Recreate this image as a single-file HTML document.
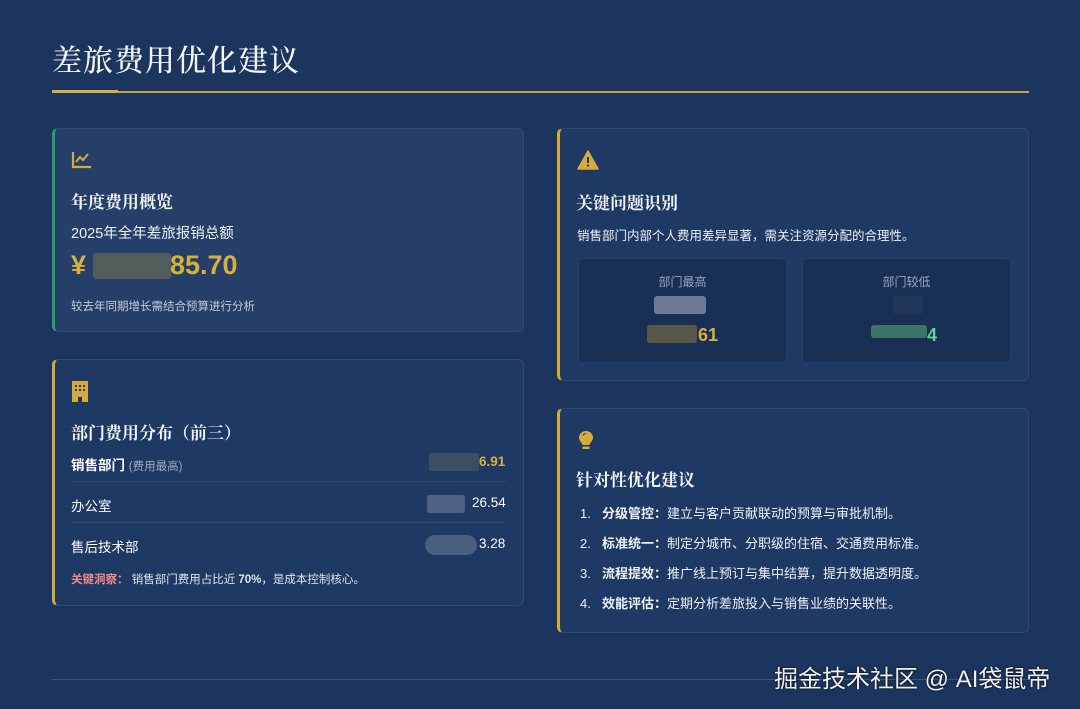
<!DOCTYPE html>
<html><head><meta charset="utf-8"><style>
*{margin:0;padding:0;box-sizing:border-box}
body{width:1080px;height:709px;background:#1b355e;font-family:"Liberation Sans","Noto Sans CJK SC",sans-serif;color:#fff;position:relative;overflow:hidden}
.abs{position:absolute}
h1{position:absolute;left:52px;top:36px;font-family:"Liberation Serif","Noto Serif CJK SC",serif;font-weight:500;font-size:30px;letter-spacing:1px;color:#f4f6fa}
.card{position:absolute;border:1px solid #2d4a75;border-radius:6px;background:#1e3963}
.h{font-family:"Liberation Serif","Noto Serif CJK SC",serif;font-weight:700;font-size:17px;color:#f1f3f7;position:absolute;left:16px}
.blk{position:absolute;border-radius:3px}
</style></head><body>
<h1>差旅费用优化建议</h1>
<div class="abs" style="left:52px;top:91px;width:977px;height:2px;background:#c9a63a"></div>
<div class="abs" style="left:52px;top:90px;width:66px;height:3px;background:#d8b040"></div>

<!-- card1 -->
<div class="card" style="left:52px;top:128px;width:472px;height:204px;background:#253f68;border-left:3px solid #2e9a6a">
<svg class="abs" style="left:16px;top:21px" width="22" height="20" viewBox="0 0 22 20"><path d="M2 2V17H20" stroke="#d6ab3a" stroke-width="2.2" fill="none"/><path d="M5 12L9 7L12 10L17 4" stroke="#d6ab3a" stroke-width="2" fill="none"/></svg>
<div class="h" style="top:59px">年度费用概览</div>
<div class="abs" style="left:16px;top:93px;font-size:14.5px;color:#eef1f6">2025年全年差旅报销总额</div>
<div class="abs" style="left:16px;top:121px;font-size:27px;font-weight:700;color:#d8b13c">¥</div>
<div class="blk" style="left:38px;top:124px;width:78px;height:26px;background:#5b6158;opacity:.85"></div>
<div class="abs" style="left:115px;top:121px;font-size:27px;font-weight:700;color:#d8b13c">85.70</div>
<div class="abs" style="left:16px;top:169px;font-size:11.5px;color:#c4cbd8">较去年同期增长需结合预算进行分析</div>
</div>

<!-- card2 -->
<div class="card" style="left:52px;top:359px;width:472px;height:247px;border-left:3px solid #d2ab3a">
<svg class="abs" style="left:17px;top:21px" width="16" height="21" viewBox="0 0 16 21"><path d="M0 0H16V21H10V16H6V21H0Z" fill="#d6ab3a"/><g fill="#1e3963"><rect x="3" y="4" width="2" height="2"/><rect x="7" y="4" width="2" height="2"/><rect x="11" y="4" width="2" height="2"/><rect x="3" y="8" width="2" height="2"/><rect x="7" y="8" width="2" height="2"/><rect x="11" y="8" width="2" height="2"/></g></svg>
<div class="h" style="top:59px">部门费用分布（前三）</div>
<div class="abs" style="left:16px;top:94px;font-size:13.5px;font-weight:700">销售部门 <span style="font-weight:400;font-size:11.5px;color:#9fabbf">(费用最高)</span></div>
<div class="blk" style="left:374px;top:93px;width:50px;height:18px;background:#3b4e63"></div>
<div class="abs" style="left:424px;top:94px;font-size:13.5px;font-weight:700;color:#d8b13c">6.91</div>
<div class="abs" style="left:16px;top:121px;width:435px;height:1px;background:#2c4a72"></div>
<div class="abs" style="left:16px;top:135px;font-size:13.5px">办公室</div>
<div class="blk" style="left:372px;top:135px;width:38px;height:18px;background:#4f6283"></div>
<div class="abs" style="left:417px;top:135px;font-size:13.5px">26.54</div>
<div class="abs" style="left:16px;top:162px;width:435px;height:1px;background:#2c4a72"></div>
<div class="abs" style="left:16px;top:176px;font-size:13.5px">售后技术部</div>
<div class="blk" style="left:370px;top:175px;width:52px;height:20px;background:#4a5f80;border-radius:10px"></div>
<div class="abs" style="left:424px;top:176px;font-size:13.5px">3.28</div>
<div class="abs" style="left:16px;top:211px;font-size:11.5px;color:#dfe4ec"><span style="color:#f28a8a;font-weight:700">关键洞察：</span> 销售部门费用占比近 <b>70%</b>，是成本控制核心。</div>
</div>

<!-- card3 -->
<div class="card" style="left:557px;top:128px;width:472px;height:253px;border-left:3px solid #d2ab3a">
<svg class="abs" style="left:17px;top:21px" width="22" height="20" viewBox="0 0 22 20"><path d="M11 1L21 19H1Z" fill="#d6ab3a" stroke="#d6ab3a" stroke-linejoin="round" stroke-width="1.5"/><rect x="10" y="7" width="2" height="6" fill="#1e3963"/><rect x="10" y="14.5" width="2" height="2" fill="#1e3963"/></svg>
<div class="h" style="top:60px">关键问题识别</div>
<div class="abs" style="left:17px;top:96px;font-size:12.5px;color:#eef1f6">销售部门内部个人费用差异显著，需关注资源分配的合理性。</div>
<div class="abs" style="left:18px;top:129px;width:209px;height:105px;background:#192f53;border:1px solid #253f66;border-radius:5px">
 <div class="abs" style="left:0;right:0;top:14px;text-align:center;font-size:12px;color:#9aa6ba">部门最高</div>
 <div class="blk" style="left:75px;top:37px;width:52px;height:18px;background:#6a7a94"></div>
 <div class="blk" style="left:68px;top:66px;width:50px;height:18px;background:#59564a"></div>
 <div class="abs" style="left:119px;top:66px;font-size:18px;font-weight:700;color:#d8b13c">61</div>
</div>
<div class="abs" style="left:242px;top:129px;width:209px;height:105px;background:#192f53;border:1px solid #253f66;border-radius:5px">
 <div class="abs" style="left:0;right:0;top:14px;text-align:center;font-size:12px;color:#9aa6ba">部门较低</div>
 <div class="blk" style="left:90px;top:37px;width:30px;height:18px;background:#22375a"></div>
 <div class="blk" style="left:68px;top:66px;width:56px;height:13px;background:#3c7466"></div>
 <div class="abs" style="left:124px;top:66px;font-size:18px;font-weight:700;color:#5fd39b">4</div>
</div>
</div>

<!-- card4 -->
<div class="card" style="left:557px;top:408px;width:472px;height:225px;border-left:3px solid #d2ab3a">
<svg class="abs" style="left:18px;top:21px" width="16" height="22" viewBox="0 0 16 22"><path d="M8 1C3.5 1 1 4.5 1 7.5C1 11 4 12.5 4.5 15H11.5C12 12.5 15 11 15 7.5C15 4.5 12.5 1 8 1Z" fill="#d6ab3a"/><rect x="4.5" y="16.5" width="7" height="2.5" fill="#d6ab3a"/><path d="M5 5.5Q6 3.5 8 3.5" stroke="#1e3963" stroke-width="1" fill="none"/></svg>
<div class="h" style="top:57px">针对性优化建议</div>
<div class="abs" style="left:20px;top:90px;font-size:13px;line-height:30px;color:#eef1f6">
<div><span style="display:inline-block;width:22px">1.</span><b>分级管控：</b>建立与客户贡献联动的预算与审批机制。</div>
<div><span style="display:inline-block;width:22px">2.</span><b>标准统一：</b>制定分城市、分职级的住宿、交通费用标准。</div>
<div><span style="display:inline-block;width:22px">3.</span><b>流程提效：</b>推广线上预订与集中结算，提升数据透明度。</div>
<div><span style="display:inline-block;width:22px">4.</span><b>效能评估：</b>定期分析差旅投入与销售业绩的关联性。</div>
</div>
</div>

<div class="abs" style="left:52px;top:679px;width:977px;height:1px;background:#3a5680"></div>
<div class="abs" style="left:774px;top:659px;font-size:24px;color:#f0f0f0;text-shadow:0 0 2px #000;white-space:nowrap">掘金技术社区 @ AI袋鼠帝</div>
</body></html>
